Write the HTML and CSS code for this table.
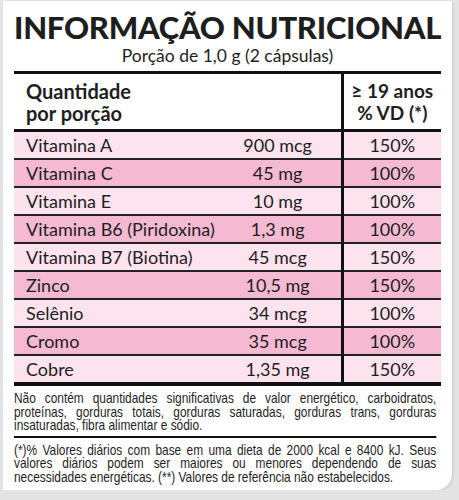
FILE: index.html
```html
<!DOCTYPE html>
<html>
  <head>
    <title>Informação Nutricional</title>
    <meta charset="UTF-8" />
    <meta name="viewport" content="width=device-width, initial-scale=1.0" />
    <link rel="stylesheet" href="styles.css">
  </head>
  <body>
    <div class="panel">
      <h1>INFORMAÇÃO NUTRICIONAL</h1>
      <p class="portion">Porção de 1,0 g (2 cápsulas)</p>

      <table class="facts">
        <thead>
          <tr>
            <th class="name" colspan="2">Quantidade<br>por porção</th>
            <th class="vd">≥ 19 anos<br>% VD (*)</th>
          </tr>
        </thead>
        <tbody>
          <tr class="light"><td class="name">Vitamina A</td><td class="amount">900 mcg</td><td class="vd">150%</td></tr>
          <tr class="dark"><td class="name">Vitamina C</td><td class="amount">45 mg</td><td class="vd">100%</td></tr>
          <tr class="light"><td class="name">Vitamina E</td><td class="amount">10 mg</td><td class="vd">100%</td></tr>
          <tr class="dark"><td class="name">Vitamina B6 (Piridoxina)</td><td class="amount">1,3 mg</td><td class="vd">100%</td></tr>
          <tr class="light"><td class="name">Vitamina B7 (Biotina)</td><td class="amount">45 mcg</td><td class="vd">150%</td></tr>
          <tr class="dark"><td class="name">Zinco</td><td class="amount">10,5 mg</td><td class="vd">150%</td></tr>
          <tr class="light"><td class="name">Selênio</td><td class="amount">34 mcg</td><td class="vd">100%</td></tr>
          <tr class="dark"><td class="name">Cromo</td><td class="amount">35 mcg</td><td class="vd">100%</td></tr>
          <tr class="light"><td class="name">Cobre</td><td class="amount">1,35 mg</td><td class="vd">150%</td></tr>
        </tbody>
      </table>

      <div class="notes">
        <p class="note first">Não contém quantidades significativas de valor energético, carboidratos, proteínas, gorduras totais, gorduras saturadas, gorduras trans, gorduras insaturadas, fibra alimentar e sódio.</p>
        <p class="note">(*)% Valores diários com base em uma dieta de 2000 kcal e 8400 kJ. Seus valores diários podem ser maiores ou menores dependendo de suas necessidades energéticas. (**) Valores de referência não estabelecidos.</p>
      </div>
    </div>
  </body>
</html>
```

FILE: styles.css
```css
body {
  margin: 0;
  background-color: #e4e4e4;
  font-family: Lato, "Noto Sans", sans-serif;
  color: #1e1e1e;
}
.panel {
  background-color: white;
  margin: 1px 7px 0 3px;
  height: 489px;
  padding: 0 11px;
  border-bottom-right-radius: 16px;
  box-shadow: 1px 1px 3px rgba(0,0,0,0.12);
  overflow: hidden;
}
h1 {
  margin: 0;
  padding-top: 8px;
  font-weight: 900;
  font-size: 31px;
  line-height: 36px;
  text-align: center;
  white-space: nowrap;
  letter-spacing: -0.25px;
}
.portion {
  margin: 0;
  font-size: 17.5px;
  line-height: 22px;
  text-align: center;
}
.facts {
  width: 427px;
  margin-top: 4px;
  border-collapse: collapse;
  border-top: 3px solid #111;
  border-bottom: 4px solid #111;
  font-size: 18px;
}
.facts th {
  height: 55px;
  padding: 0;
  font-size: 20px;
  line-height: 22px;
  font-weight: bold;
  border-bottom: 3px solid #111;
}
.facts th.name {
  text-align: left;
  padding-left: 12px;
}
.facts th.vd {
  font-size: 19px;
}
.facts td {
  height: 26px;
  padding: 0;
  line-height: 26px;
  border-bottom: 2px solid #222;
}
.facts td.name {
  padding-left: 12px;
  white-space: nowrap;
}
.facts td.amount {
  width: 132px;
  text-align: center;
}
.facts .vd {
  width: 101px;
  text-align: center;
  border-left: 3px solid #111;
}
.light td {
  background-color: #fce3ed;
}
.dark td {
  background-color: #f5b9d2;
}
.notes {
  width: 515px;
  margin-top: 6px;
  transform: scaleX(0.82);
  transform-origin: left top;
}
.note {
  margin: 0;
  font-family: "Liberation Sans", Arial, sans-serif;
  font-size: 14.5px;
  line-height: 13.5px;
  text-align: justify;
}
.note.first {
  padding-bottom: 3px;
  margin-bottom: 6px;
  border-bottom: 2px solid #111;
}
```
